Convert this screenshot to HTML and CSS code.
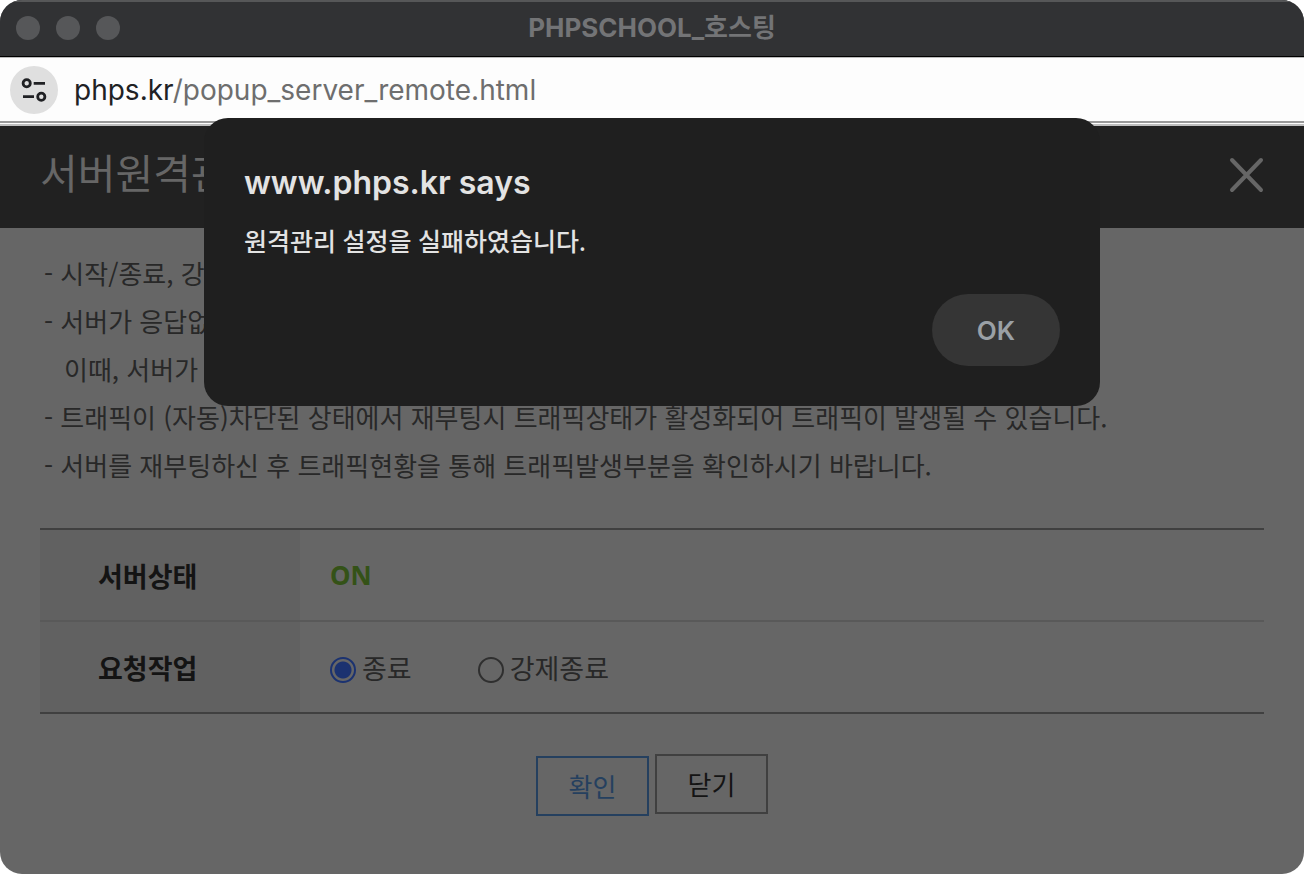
FILE: index.html
```
<!DOCTYPE html>
<html lang="ko">
<head>
<meta charset="utf-8">
<title>PHPSCHOOL_호스팅</title>
<link rel="stylesheet" href="styles.css">
</head>
<body>
<div class="window">
  <div class="titlebar">
    <div class="lights"><span class="light"></span><span class="light"></span><span class="light"></span></div>
    <div class="window-title">PHPSCHOOL_호스팅</div>
  </div>
  <div class="address">
    <button class="site-info" type="button" aria-label="Site information">
      <svg width="26" height="26" viewBox="0 0 26 26" fill="none" stroke="#202124" stroke-width="2.8">
        <circle cx="5.7" cy="6.3" r="3.6"/><path d="M12.7 6.3H24M2 19.7h11"/><circle cx="20.3" cy="19.7" r="3.6"/>
      </svg>
    </button>
    <div class="url">phps.kr<span class="path">/popup_server_remote.html</span></div>
  </div>
  <header class="page-header">
    <h1 class="page-title">서버원격관</h1>
    <button class="close" type="button" aria-label="닫기">
      <svg width="36" height="36" viewBox="0 0 36 36" fill="none" stroke="#666" stroke-width="4" stroke-linecap="round"><path d="M4 3l29 30M33 3L4 33"/></svg>
    </button>
  </header>
  <main class="content">
    <ul class="notes">
      <li>- 시작/종료, 강</li>
      <li>- 서버가 응답없</li>
      <li class="sub">이때, 서버가</li>
      <li>- 트래픽이 (자동)차단된 상태에서 재부팅시 트래픽상태가 활성화되어 트래픽이 발생될 수 있습니다.</li>
      <li>- 서버를 재부팅하신 후 트래픽현황을 통해 트래픽발생부분을 확인하시기 바랍니다.</li>
    </ul>
    <table class="settings">
      <tr><th scope="row">서버상태</th><td><strong class="on">ON</strong></td></tr>
      <tr><th scope="row">요청작업</th><td>
        <div class="options">
          <label class="option"><input class="radio" type="radio" name="job" checked>종료</label>
          <label class="option"><input class="radio" type="radio" name="job">강제종료</label>
        </div>
      </td></tr>
    </table>
    <div class="actions">
      <button class="btn btn-primary" type="button">확인</button>
      <button class="btn" type="button">닫기</button>
    </div>
  </main>
  <div class="dialog" role="alertdialog" aria-labelledby="dialog-title" aria-describedby="dialog-text">
    <h2 class="dialog-title" id="dialog-title">www.phps.kr says</h2>
    <p class="dialog-text" id="dialog-text">원격관리 설정을 실패하였습니다.</p>
    <button class="ok" type="button">OK</button>
  </div>
</div>
</body>
</html>
```
FILE: styles.css
```
* { box-sizing: border-box; }
body {
  margin: 0;
  background: #fff;
  font-family: "Noto Sans", "Noto Sans CJK KR", sans-serif;
  font-size: 26px;
  color: #282828;
}
button { font: inherit; padding: 0; border: 0; background: none; }
.window {
  position: relative;
  display: flex;
  flex-direction: column;
  min-height: 100vh;
  border-radius: 22px;
  overflow: hidden;
  background: #666;
}
.titlebar {
  display: grid;
  grid-template-columns: 1fr auto 1fr;
  align-items: center;
  height: 57px;
  padding: 0 16px 2px;
  background: #313234;
  border-top: 2px solid #565758;
  border-bottom: 1px solid #000;
}
.lights { display: flex; gap: 16px; }
.light { width: 24px; height: 24px; border-radius: 50%; background: #565759; }
.window-title {
  font-family: Inter, "Noto Sans CJK KR", sans-serif;
  font-weight: 700;
  line-height: 32px;
  color: #737476;
}
.address {
  display: flex;
  align-items: center;
  gap: 16px;
  height: 66px;
  padding: 0 10px;
  background: #fdfdfd;
  border-top: 1px solid #bbb;
  border-bottom: 2px solid #999;
}
.site-info {
  display: grid;
  place-items: center;
  width: 48px;
  height: 48px;
  border-radius: 50%;
  background: #dfdfdf;
}
.url { font-family: Inter, sans-serif; font-size: 28px; line-height: 36px; color: #202124; }
.path { color: #6e6e6e; }
.page-header {
  display: flex;
  align-items: center;
  justify-content: space-between;
  height: 104px;
  margin-top: 1px;
  padding: 0 40px 4px;
  background: #212121;
  border-top: 2px solid #bfbfbf;
  box-shadow: 0 -1px #fdfdfd;
}
.page-title { margin: 0; padding-bottom: 4px; font-size: 41px; font-weight: 400; line-height: 56px; color: #666; }
.close { display: grid; }
.content { padding: 21px 40px 56px; }
.notes { margin: 0 0 39px; padding: 0 4px; list-style: none; font-family: "Noto Sans CJK KR", sans-serif; line-height: 48px; }
.sub { padding-left: 20px; }
.settings {
  width: 100%;
  border-collapse: collapse;
  border-top: 2px solid #404040;
  border-bottom: 2px solid #404040;
}
.settings th, .settings td { height: 92px; padding: 0 30px; text-align: left; }
.settings th { width: 260px; padding-left: 58px; background: #616161; color: #141414; font-size: 27px; font-weight: 700; }
.settings tr + tr { border-top: 2px solid #595959; }
.on { color: #345217; }
.options { display: flex; gap: 66px; font-size: 27px; }
.option { display: flex; align-items: center; gap: 6px; }
.radio {
  appearance: none;
  width: 26px;
  height: 26px;
  margin: 5px 0 0;
  border: 2px solid #2f2f2f;
  border-radius: 50%;
}
.radio:checked {
  border-color: #1b3270;
  background: radial-gradient(circle, #1b3270 8px, transparent 9px);
}
.actions { display: flex; justify-content: center; align-items: flex-start; gap: 6px; min-height: 62px; margin-top: 40px; }
.btn { width: 113px; height: 60px; border: 2px solid #404040; color: #141414; }
.btn-primary { align-self: flex-end; border-color: #25405f; color: #25405f; }
.dialog {
  position: absolute;
  top: 118px;
  left: 50%;
  transform: translateX(-50%);
  width: 896px;
  max-width: 100%;
  display: flex;
  flex-direction: column;
  padding: 45px 40px 40px;
  border-radius: 24px;
  background: #1f1f1f;
  color: #e3e3e3;
}
.dialog-title { margin: 0 0 18px; font-family: Inter, sans-serif; font-size: 32px; font-weight: 600; line-height: 40px; }
.dialog-text { margin: 0 0 33px; font-size: 25px; font-weight: 500; line-height: 40px; }
.ok {
  align-self: flex-end;
  width: 128px;
  height: 72px;
  border-radius: 36px;
  background: #353535;
  color: #9aa0a6;
  font-family: Inter, sans-serif;
  font-weight: 600;
}
```
